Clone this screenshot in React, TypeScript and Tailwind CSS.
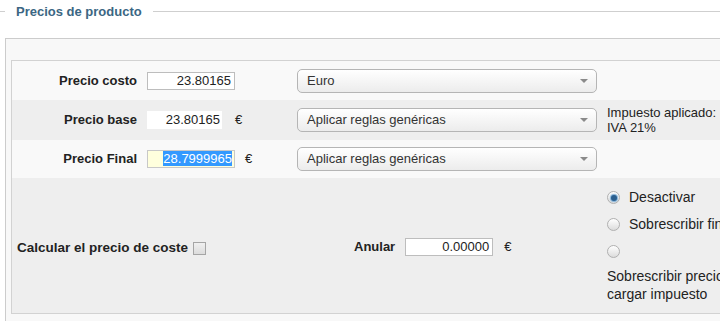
import React from 'react';

function Select({ label }: { label: string }) {
  return (
    <div className="flex h-[24px] w-[300px] items-center justify-between rounded-[5px] border border-[#b5b5b5] bg-linear-to-b from-white to-[#ececec] pl-[9px] pr-[8px] text-[13px] text-[#333]">
      <span>{label}</span>
      <span className="h-0 w-0 border-x-[4px] border-t-[4px] border-x-transparent border-t-[#8a8a8a]" />
    </div>
  );
}

function Radio({ checked }: { checked?: boolean }) {
  return (
    <span className="flex h-[13px] w-[13px] items-center justify-center rounded-full border border-[#b0b0b0] bg-linear-to-b from-white to-[#dcdcdc]">
      {checked && <span className="h-[6px] w-[6px] rounded-full bg-[#2a5f8f] shadow-[0_0_1px_1px_#7fb0d8]" />}
    </span>
  );
}

function Label({ children }: { children: React.ReactNode }) {
  return <div className="w-[126px] pr-px text-right text-[13px] font-bold text-[#222]">{children}</div>;
}

export default function App() {
  return (
    <div className="h-[321px] w-[720px] overflow-hidden bg-white font-['Liberation_Sans',Arial,sans-serif] text-[13px] text-[#222]">
      <div className="flex h-[23px] items-center">
        <div className="h-px w-[5px] bg-[#cfcfcf]" />
        <div className="px-[11px] text-[13px] font-bold text-[#3b6683]">Precios de producto</div>
        <div className="h-px flex-1 bg-[#cfcfcf]" />
      </div>

      <div className="ml-[5px] mt-[15px] w-[780px] border border-[#cccccc] bg-[#f8f8f8] pb-[8px] pl-[5px] pt-[21px]">
        <div className="w-[760px] border border-[#d2d2d2]">
          {/* Precio costo */}
          <div className="flex h-[39px] items-center bg-[#f9f9f9]">
            <Label>Precio costo</Label>
            <div className="flex w-[159px] items-center pl-[9px]">
              <div className="h-[18px] w-[88px] border border-[#bdbdbd] bg-white pr-[3px] text-right leading-[16px]">23.80165</div>
            </div>
            <div className="w-[310px]">
              <Select label="Euro" />
            </div>
          </div>

          {/* Precio base */}
          <div className="flex h-[40px] items-center bg-[#eeeeee]">
            <Label>Precio base</Label>
            <div className="flex w-[159px] items-center pl-[9px]">
              <div className="h-[18px] w-[75px] bg-white pr-[2px] text-right leading-[18px]">23.80165</div>
              <span className="ml-[13px]">€</span>
            </div>
            <div className="w-[310px]">
              <Select label="Aplicar reglas genéricas" />
            </div>
            <div className="leading-[15px] text-[#222]">
              <div>Impuesto aplicado:</div>
              <div>IVA 21%</div>
            </div>
          </div>

          {/* Precio Final */}
          <div className="flex h-[38px] items-center bg-[#f9f9f9]">
            <Label>Precio Final</Label>
            <div className="flex w-[159px] items-center pl-[9px]">
              <div className="h-[18px] w-[88px] border border-[#c8c8c8] bg-[#ffffdd] pr-[2px] text-right leading-[16px]">
                <span className="bg-[#3399ff] text-white">28.7999965</span>
              </div>
              <span className="ml-[10px]">€</span>
            </div>
            <div className="w-[310px]">
              <Select label="Aplicar reglas genéricas" />
            </div>
          </div>

          {/* Calcular / Anular */}
          <div className="flex items-center bg-[#eeeeee]">
            <div className="flex w-[285px] items-center pl-[5px] pt-[5px]">
              <span className="text-[13.5px] font-bold text-[#222]">Calcular el precio de coste</span>
              <span className="ml-[5px] h-[13px] w-[13px] border border-[#a5a5a5] bg-linear-to-b from-[#f0f0f0] to-[#dcdcdc]" />
            </div>
            <div className="flex w-[310px] items-center pl-[57px] pt-[3px]">
              <span className="font-bold">Anular</span>
              <div className="ml-[10px] h-[18px] w-[88px] border border-[#bdbdbd] bg-white pr-[3px] text-right leading-[16px]">0.00000</div>
              <span className="ml-[11px]">€</span>
            </div>
            <div className="pb-[10px] pt-[6px] text-[14px] text-[#222]">
              <div className="flex h-[27px] items-center">
                <Radio checked />
                <span className="ml-[9px]">Desactivar</span>
              </div>
              <div className="flex h-[27px] items-center">
                <Radio />
                <span className="ml-[9px] whitespace-nowrap">Sobrescribir final</span>
              </div>
              <div className="flex h-[27px] items-center">
                <Radio />
              </div>
              <div className="mt-[2px] w-[130px] leading-[18px]">Sobrescribir precio y cargar impuesto</div>
            </div>
          </div>
        </div>
      </div>
    </div>
  );
}
